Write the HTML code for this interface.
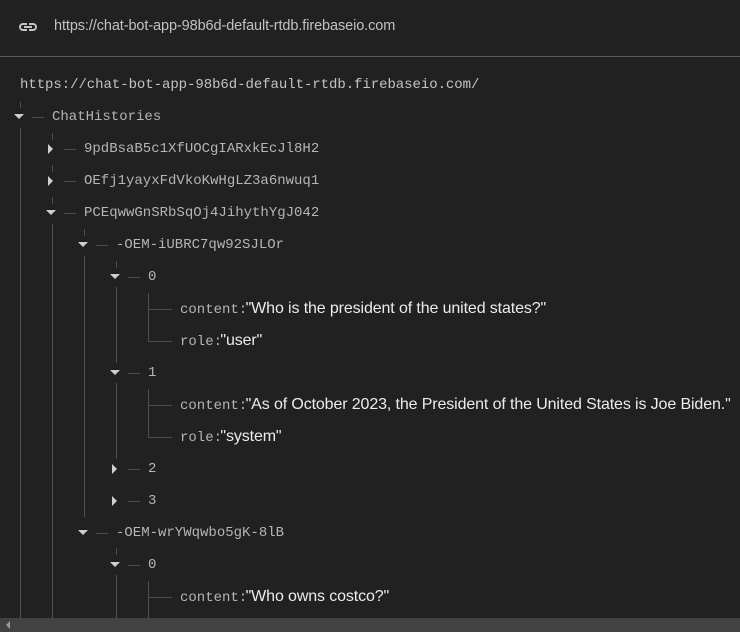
<!DOCTYPE html>
<html><head><meta charset="utf-8"><style>
html,body{margin:0;padding:0;background:#212121;width:740px;height:632px;overflow:hidden;position:relative;font-family:"Liberation Sans",sans-serif}
.a{position:absolute}
.m{font-family:"Liberation Mono",monospace;font-size:14px;color:#b5b5b5;white-space:nowrap;line-height:16px}
.v{font-family:"Liberation Sans",sans-serif;font-size:16px;color:#ececec;letter-spacing:-0.12px;margin-left:-10px}
.vl{position:absolute;width:1px;background:#4e4e4e}
.hl{position:absolute;height:1px;background:#4e4e4e}
.dn{position:absolute;width:0;height:0;border-left:5px solid transparent;border-right:5px solid transparent;border-top:5px solid #cfcfcf}
.rt{position:absolute;width:0;height:0;border-top:5px solid transparent;border-bottom:5px solid transparent;border-left:5px solid #cfcfcf}
</style></head><body>
<svg class="a" style="left:17px;top:19px" width="22" height="16" viewBox="0 0 22 16"><path d="M6 4h4v2H6a2 2 0 0 0 0 4h4v2H6a4 4 0 0 1 0-8zm6 0h4a4 4 0 0 1 0 8h-4v-2h4a2 2 0 0 0 0-4h-4zM7 7h8v2H7z" fill="#c2c2c2"/></svg>
<div class="a" style="left:54px;top:18px;font-size:14.5px;color:#c2c2c2;letter-spacing:-0.1px">https://chat-bot-app-98b6d-default-rtdb.firebaseio.com</div>
<div class="a" style="left:0;top:56px;width:740px;height:1px;background:#5a5a5a"></div>
<div class="a m" style="left:20px;top:77px;letter-spacing:-0.05px;color:#c4c4c4">https://chat-bot-app-98b6d-default-rtdb.firebaseio.com/</div>

<div class="vl" style="left:20px;top:102px;height:6px"></div>
<div class="vl" style="left:20px;top:128px;height:490px"></div>
<div class="vl" style="left:52px;top:133px;height:7px"></div>
<div class="vl" style="left:52px;top:165px;height:7px"></div>
<div class="vl" style="left:52px;top:197px;height:7px"></div>
<div class="vl" style="left:52px;top:224px;height:394px"></div>
<div class="vl" style="left:84px;top:229px;height:7px"></div>
<div class="vl" style="left:84px;top:256px;height:261px"></div>
<div class="vl" style="left:116px;top:261px;height:7px"></div>
<div class="vl" style="left:116px;top:287px;height:76px"></div>
<div class="vl" style="left:116px;top:383px;height:76px"></div>
<div class="vl" style="left:116px;top:548px;height:7px"></div>
<div class="vl" style="left:116px;top:575px;height:43px"></div>
<div class="vl" style="left:148px;top:293px;height:48px"></div>
<div class="hl" style="left:148px;top:309px;width:24px"></div>
<div class="hl" style="left:148px;top:341px;width:24px"></div>
<div class="vl" style="left:148px;top:389px;height:48px"></div>
<div class="hl" style="left:148px;top:405px;width:24px"></div>
<div class="hl" style="left:148px;top:437px;width:24px"></div>
<div class="vl" style="left:148px;top:581px;height:37px"></div>
<div class="hl" style="left:148px;top:597px;width:24px"></div>

<div class="dn" style="left:14px;top:114px"></div><div class="hl" style="left:32px;top:117px;width:12px"></div><div class="a m" style="left:52px;top:109px">ChatHistories</div>
<div class="rt" style="left:48px;top:144px"></div><div class="hl" style="left:64px;top:149px;width:12px"></div><div class="a m" style="left:84px;top:141px">9pdBsaB5c1XfUOCgIARxkEcJl8H2</div>
<div class="rt" style="left:48px;top:176px"></div><div class="hl" style="left:64px;top:181px;width:12px"></div><div class="a m" style="left:84px;top:173px">OEfj1yayxFdVkoKwHgLZ3a6nwuq1</div>
<div class="dn" style="left:46px;top:210px"></div><div class="hl" style="left:64px;top:213px;width:12px"></div><div class="a m" style="left:84px;top:205px">PCEqwwGnSRbSqOj4JihythYgJ042</div>
<div class="dn" style="left:78px;top:242px"></div><div class="hl" style="left:96px;top:245px;width:12px"></div><div class="a m" style="left:116px;top:237px">-OEM-iUBRC7qw92SJLOr</div>
<div class="dn" style="left:110px;top:274px"></div><div class="hl" style="left:128px;top:277px;width:12px"></div><div class="a m" style="left:148px;top:269px">0</div>
<div class="a m" style="left:180px;top:301px">content: <span class="v">"Who is the president of the united states?"</span></div>
<div class="a m" style="left:180px;top:333px">role: <span class="v">"user"</span></div>
<div class="dn" style="left:110px;top:370px"></div><div class="hl" style="left:128px;top:373px;width:12px"></div><div class="a m" style="left:148px;top:365px">1</div>
<div class="a m" style="left:180px;top:397px">content: <span class="v">"As of October 2023, the President of the United States is Joe Biden."</span></div>
<div class="a m" style="left:180px;top:429px">role: <span class="v">"system"</span></div>
<div class="rt" style="left:112px;top:464px"></div><div class="hl" style="left:128px;top:469px;width:12px"></div><div class="a m" style="left:148px;top:461px">2</div>
<div class="rt" style="left:112px;top:496px"></div><div class="hl" style="left:128px;top:501px;width:12px"></div><div class="a m" style="left:148px;top:493px">3</div>
<div class="dn" style="left:78px;top:530px"></div><div class="hl" style="left:96px;top:533px;width:12px"></div><div class="a m" style="left:116px;top:525px">-OEM-wrYWqwbo5gK-8lB</div>
<div class="dn" style="left:110px;top:562px"></div><div class="hl" style="left:128px;top:565px;width:12px"></div><div class="a m" style="left:148px;top:557px">0</div>
<div class="a m" style="left:180px;top:589px">content: <span class="v">"Who owns costco?"</span></div>

<div class="a" style="left:0;top:618px;width:740px;height:14px;background:#424242"></div>
<div class="a" style="left:6px;top:621px;width:0;height:0;border-top:4px solid transparent;border-bottom:4px solid transparent;border-right:4px solid #9a9a9a"></div>
</body></html>
